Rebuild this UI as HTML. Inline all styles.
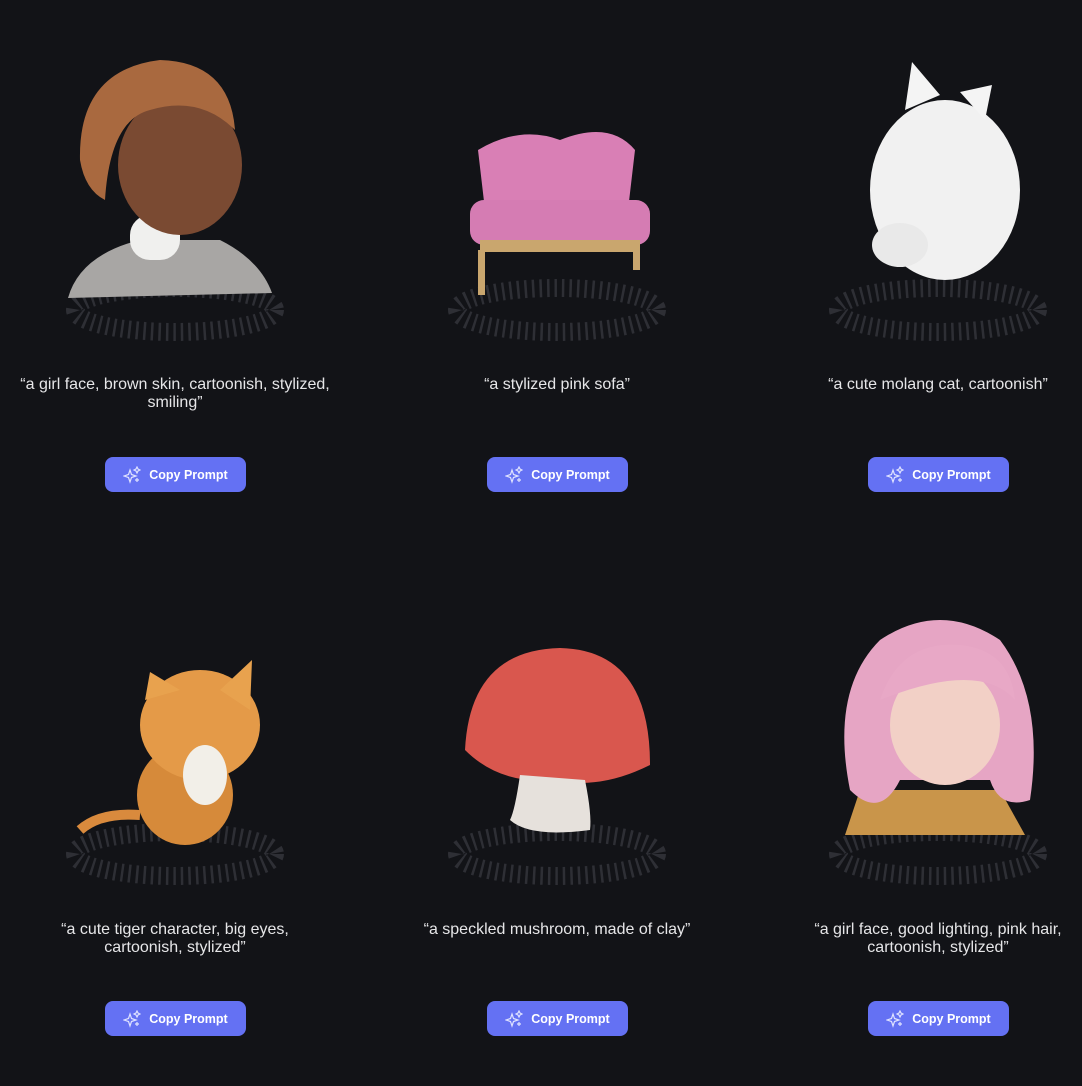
<!DOCTYPE html>
<html><head><meta charset="utf-8"><style>
body{margin:0;background:#121317;width:1082px;height:1086px;overflow:hidden;font-family:"Liberation Sans",sans-serif;position:relative}
.txt{position:absolute;left:0;width:360px;text-align:center;color:#e6e6e8;font-size:16px;line-height:18px}
.btn{position:absolute;width:141px;height:35px;background:#6471f3;border-radius:8px;color:#fff;font-size:12.5px;font-weight:bold;display:flex;align-items:center;justify-content:center;gap:8px}
</style></head><body>
<svg width="1082" height="1086" style="position:absolute;left:0;top:0">
<defs><g id="ring"><ellipse cx="0" cy="0" rx="100" ry="22" fill="none" stroke="#2e2f35" stroke-width="18" stroke-dasharray="2.5 5"/></g></defs>
<use href="#ring" x="175" y="310"/><use href="#ring" x="557" y="310"/><use href="#ring" x="938" y="310"/>
<use href="#ring" x="175" y="854"/><use href="#ring" x="557" y="854"/><use href="#ring" x="938" y="854"/>
<!-- girl 1 -->
<path d="M68 298 Q80 255 140 240 L220 240 Q260 260 272 293 Z" fill="#a8a6a4"/>
<rect x="130" y="215" width="50" height="45" rx="20" fill="#f0f0ee"/>
<ellipse cx="180" cy="165" rx="62" ry="70" fill="#7a4a32"/>
<path d="M80 160 Q78 70 160 60 Q230 62 235 130 Q200 95 150 110 Q110 120 105 200 Q85 190 80 160Z" fill="#a9693f"/>
<!-- sofa -->
<path d="M478 150 Q520 125 560 140 Q610 120 635 150 L628 210 L485 210 Z" fill="#d97fb5"/>
<rect x="470" y="200" width="180" height="45" rx="14" fill="#d57cb3"/>
<rect x="480" y="240" width="160" height="12" fill="#c9a66e"/>
<rect x="478" y="250" width="7" height="45" fill="#c9a66e"/><rect x="633" y="250" width="7" height="20" fill="#c9a66e"/>
<!-- cat -->
<ellipse cx="945" cy="190" rx="75" ry="90" fill="#f1f1f1"/>
<path d="M905 110 L912 62 L940 95Z M960 92 L992 85 L985 120Z" fill="#f4f4f4"/>
<ellipse cx="900" cy="245" rx="28" ry="22" fill="#e9e9e9"/>
<!-- tiger -->
<ellipse cx="185" cy="795" rx="48" ry="50" fill="#d68a3a"/>
<ellipse cx="200" cy="725" rx="60" ry="55" fill="#e49a48"/>
<path d="M145 700 L150 672 L180 690Z M220 690 L252 660 L250 710Z" fill="#e8a24e"/>
<ellipse cx="205" cy="775" rx="22" ry="30" fill="#f2efe8"/>
<path d="M80 830 Q100 812 140 815" stroke="#d98a3d" stroke-width="10" fill="none"/>
<!-- mushroom -->
<path d="M465 750 Q470 650 560 648 Q650 650 650 765 Q600 790 555 780 Q500 785 465 750Z" fill="#d9574e"/>
<path d="M520 775 Q515 810 510 820 Q530 838 590 830 Q592 815 585 780Z" fill="#e6e1dc"/>
<!-- pink girl -->
<path d="M845 835 L860 790 L1000 790 L1025 835Z" fill="#c9954a"/>
<path d="M850 790 Q830 690 880 640 Q940 600 1000 640 Q1045 700 1030 800 Q1000 810 990 780 L900 780 Q880 820 850 790Z" fill="#e6a5c4"/>
<ellipse cx="945" cy="725" rx="55" ry="60" fill="#f2d0c6"/>
<path d="M880 700 Q900 640 960 645 Q1010 650 1015 700 Q980 660 880 700Z" fill="#e8a8c6"/>
</svg>

<div class="txt" style="left:-5px;top:376px">“a girl face, brown skin, cartoonish, stylized,<br>smiling”</div>
<div class="txt" style="left:377px;top:376px">“a stylized pink sofa”</div>
<div class="txt" style="left:758px;top:376px">“a cute molang cat, cartoonish”</div>
<div class="txt" style="left:-5px;top:921px">“a cute tiger character, big eyes,<br>cartoonish, stylized”</div>
<div class="txt" style="left:377px;top:921px">“a speckled mushroom, made of clay”</div>
<div class="txt" style="left:758px;top:921px">“a girl face, good lighting, pink hair,<br>cartoonish, stylized”</div>

<div class="btn" style="left:105px;top:457px"><svg width="18" height="18" viewBox="0 0 18 18" fill="none" stroke="#dfe2ff" stroke-width="1.2"><path d="M7 4 L8.5 8.5 L13 10 L8.5 11.5 L7 16 L5.5 11.5 L1 10 L5.5 8.5Z"/><path d="M14 1 L15 3 L17 4 L15 5 L14 7 L13 5 L11 4 L13 3Z"/><path d="M14 12v4M12 14h4"/></svg>Copy Prompt</div>
<div class="btn" style="left:487px;top:457px"><svg width="18" height="18" viewBox="0 0 18 18" fill="none" stroke="#dfe2ff" stroke-width="1.2"><path d="M7 4 L8.5 8.5 L13 10 L8.5 11.5 L7 16 L5.5 11.5 L1 10 L5.5 8.5Z"/><path d="M14 1 L15 3 L17 4 L15 5 L14 7 L13 5 L11 4 L13 3Z"/><path d="M14 12v4M12 14h4"/></svg>Copy Prompt</div>
<div class="btn" style="left:868px;top:457px"><svg width="18" height="18" viewBox="0 0 18 18" fill="none" stroke="#dfe2ff" stroke-width="1.2"><path d="M7 4 L8.5 8.5 L13 10 L8.5 11.5 L7 16 L5.5 11.5 L1 10 L5.5 8.5Z"/><path d="M14 1 L15 3 L17 4 L15 5 L14 7 L13 5 L11 4 L13 3Z"/><path d="M14 12v4M12 14h4"/></svg>Copy Prompt</div>
<div class="btn" style="left:105px;top:1001px"><svg width="18" height="18" viewBox="0 0 18 18" fill="none" stroke="#dfe2ff" stroke-width="1.2"><path d="M7 4 L8.5 8.5 L13 10 L8.5 11.5 L7 16 L5.5 11.5 L1 10 L5.5 8.5Z"/><path d="M14 1 L15 3 L17 4 L15 5 L14 7 L13 5 L11 4 L13 3Z"/><path d="M14 12v4M12 14h4"/></svg>Copy Prompt</div>
<div class="btn" style="left:487px;top:1001px"><svg width="18" height="18" viewBox="0 0 18 18" fill="none" stroke="#dfe2ff" stroke-width="1.2"><path d="M7 4 L8.5 8.5 L13 10 L8.5 11.5 L7 16 L5.5 11.5 L1 10 L5.5 8.5Z"/><path d="M14 1 L15 3 L17 4 L15 5 L14 7 L13 5 L11 4 L13 3Z"/><path d="M14 12v4M12 14h4"/></svg>Copy Prompt</div>
<div class="btn" style="left:868px;top:1001px"><svg width="18" height="18" viewBox="0 0 18 18" fill="none" stroke="#dfe2ff" stroke-width="1.2"><path d="M7 4 L8.5 8.5 L13 10 L8.5 11.5 L7 16 L5.5 11.5 L1 10 L5.5 8.5Z"/><path d="M14 1 L15 3 L17 4 L15 5 L14 7 L13 5 L11 4 L13 3Z"/><path d="M14 12v4M12 14h4"/></svg>Copy Prompt</div>
</body></html>
